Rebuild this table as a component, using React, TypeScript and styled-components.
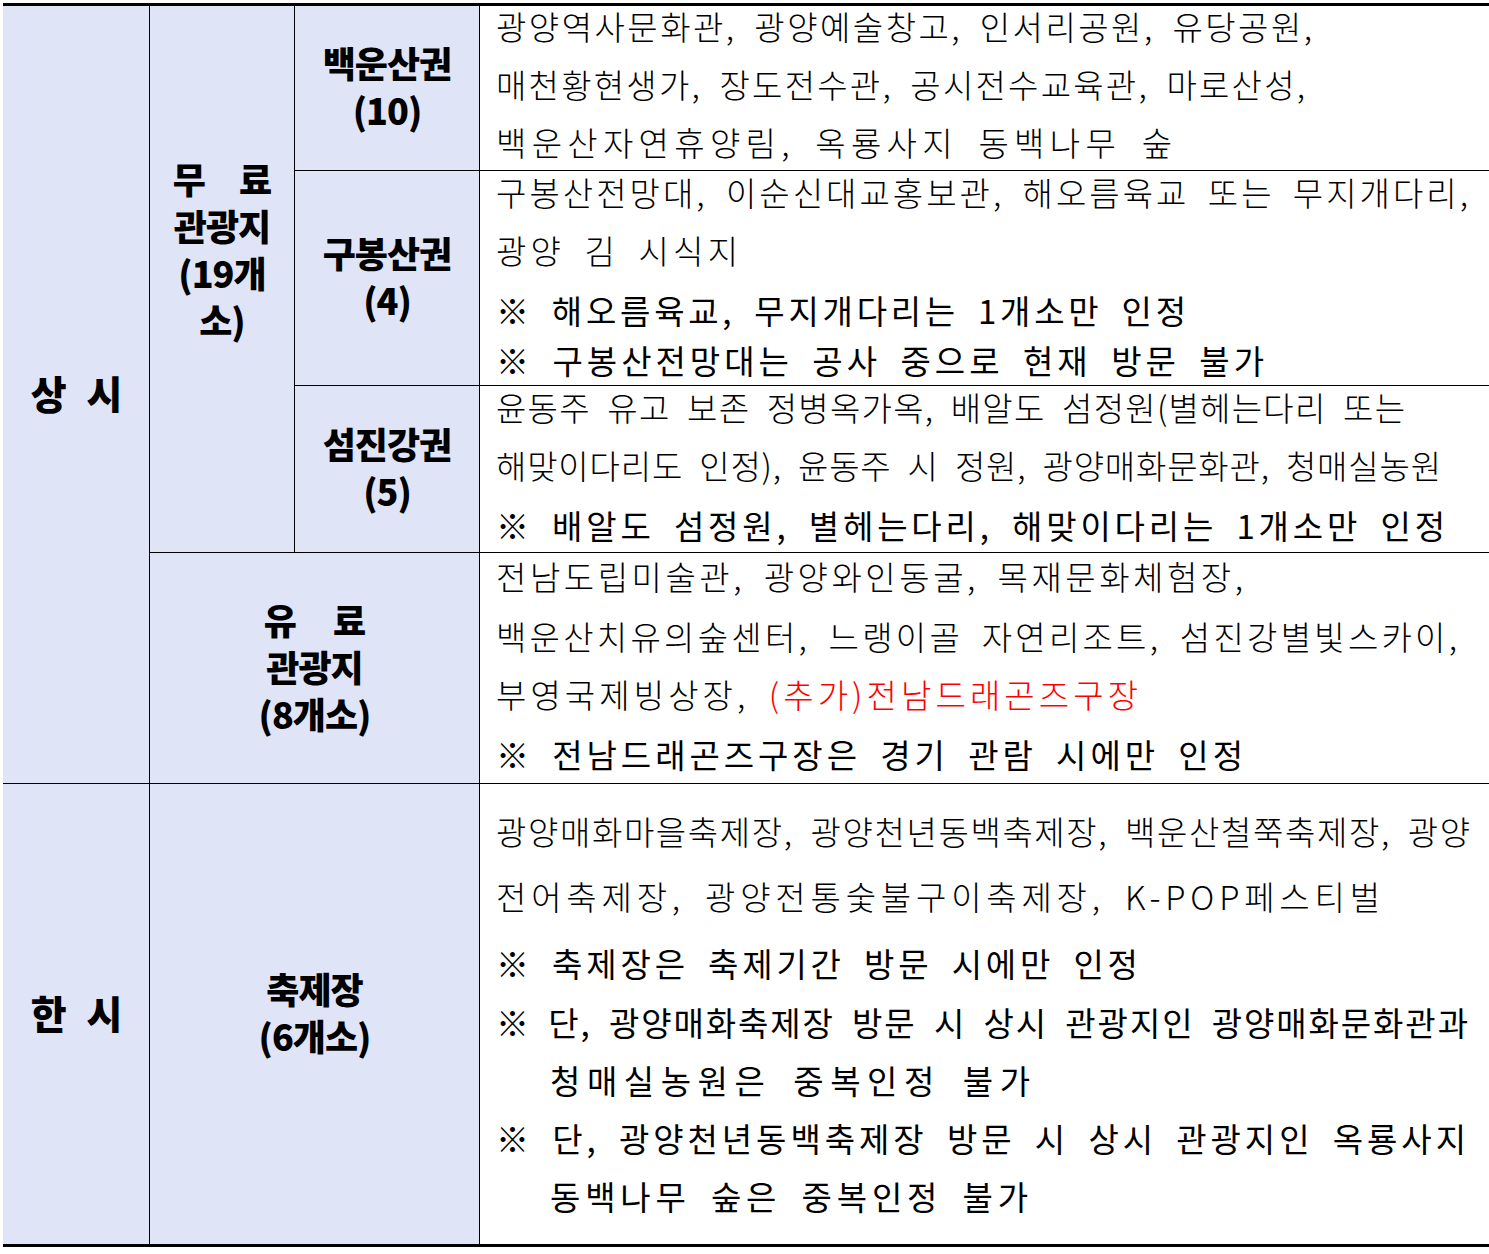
import React, { useLayoutEffect, useRef } from 'react';
import styled, { createGlobalStyle } from 'styled-components';

const Global = createGlobalStyle`
  html, body { margin: 0; padding: 0; background: #ffffff; }
  body { font-family: "Noto Sans CJK KR", "Noto Sans", sans-serif; color: #000; }
`;

const Table = styled.div`
  display: grid;
  grid-template-columns: 146px 144px 184px 1009px;
  grid-template-rows: 164px 214px 166px 230px 460px;
  gap: 1px;
  width: 1486px;
  margin: 3px 0 0 3px;
  background: #000;
  border-top: 3px solid #000;
  border-bottom: 3px solid #000;
`;

const LabelCell = styled.div<{ $col: string; $row: string; $shift?: number }>`
  grid-column: ${(p) => p.$col};
  grid-row: ${(p) => p.$row};
  background: #dfe5f7;
  display: flex;
  align-items: center;
  justify-content: center;
  padding-bottom: ${(p) => p.$shift ?? 4}px;
  box-sizing: border-box;
`;

const Label = styled.div<{ $size?: number; $ws?: number }>`
  font-family: "Noto Sans CJK KR", "Noto Sans", sans-serif;
  font-weight: 900;
  font-size: ${(p) => p.$size ?? 36}px;
  line-height: 47px;
  text-align: center;
  word-spacing: ${(p) => p.$ws ?? 0}px;
  white-space: nowrap;
  letter-spacing: -1px;
`;

const TextCell = styled.div<{ $row: string; $pt: number }>`
  grid-column: 4;
  grid-row: ${(p) => p.$row};
  background: #fff;
  display: flex;
  flex-direction: column;
  align-items: flex-start;
  padding: ${(p) => p.$pt}px 0 0 16px;
  box-sizing: border-box;
`;

const LineText = styled.span<{ $mt: number; $indent: number; $note: boolean }>`
  display: inline-block;
  margin-top: ${(p) => p.$mt}px;
  margin-left: ${(p) => p.$indent}px;
  font-family: "Noto Sans CJK KR", "Noto Sans", sans-serif;
  font-size: 33px;
  font-weight: ${(p) => (p.$note ? 400 : 300)};
  line-height: 40px;
  height: 40px;
  word-spacing: 8px;
  white-space: nowrap;
`;

const Red = styled.span`
  color: #ff0000;
`;

type LineDef = { t: React.ReactNode; end: number; mt?: number; indent?: number; note?: boolean };
type RowDef = { row: string; pt: number; lines: LineDef[] };

const FitLine: React.FC<{ line: LineDef }> = ({ line }) => {
  const ref = useRef<HTMLSpanElement>(null);
  const indent = line.indent ?? 0;
  const target = line.end - 496 - indent;
  useLayoutEffect(() => {
    const el = ref.current;
    if (!el) return;
    const fit = () => {
      el.style.letterSpacing = '0px';
      const w = el.getBoundingClientRect().width;
      const n = Array.from(el.textContent || '').length;
      const v = (target - w) / Math.max(n - 1, 1);
      el.style.letterSpacing = `${v}px`;
    };
    fit();
    if (document.fonts && document.fonts.ready) document.fonts.ready.then(fit);
  }, [target]);
  return (
    <LineText ref={ref} $mt={line.mt ?? 0} $indent={indent} $note={!!line.note}>
      {line.t}
    </LineText>
  );
};

const rows: RowDef[] = [
  {
    row: '1',
    pt: 0,
    lines: [
      { t: '광양역사문화관, 광양예술창고, 인서리공원, 유당공원,', end: 1312 },
      { t: '매천황현생가, 장도전수관, 공시전수교육관, 마로산성,', end: 1305, mt: 18 },
      { t: '백운산자연휴양림, 옥룡사지 동백나무 숲', end: 1172, mt: 18 },
    ],
  },
  {
    row: '2',
    pt: 1,
    lines: [
      { t: '구봉산전망대, 이순신대교홍보관, 해오름육교 또는 무지개다리,', end: 1468 },
      { t: '광양 김 시식지', end: 738, mt: 18 },
      { t: '※ 해오름육교, 무지개다리는 1개소만 인정', end: 1186, mt: 20, note: true },
      { t: '※ 구봉산전망대는 공사 중으로 현재 방문 불가', end: 1264, mt: 10, note: true },
    ],
  },
  {
    row: '3',
    pt: 1,
    lines: [
      { t: '윤동주 유고 보존 정병옥가옥, 배알도 섬정원(별헤는다리 또는', end: 1405 },
      { t: '해맞이다리도 인정), 윤동주 시 정원, 광양매화문화관, 청매실농원', end: 1441, mt: 18 },
      { t: '※ 배알도 섬정원, 별헤는다리, 해맞이다리는 1개소만 인정', end: 1445, mt: 20, note: true },
    ],
  },
  {
    row: '4',
    pt: 3,
    lines: [
      { t: '전남도립미술관, 광양와인동굴, 목재문화체험장,', end: 1243 },
      { t: '백운산치유의숲센터, 느랭이골 자연리조트, 섬진강별빛스카이,', end: 1457, mt: 20 },
      {
        t: (
          <>
            부영국제빙상장, <Red>(추가)전남드래곤즈구장</Red>
          </>
        ),
        end: 1138,
        mt: 18,
      },
      { t: '※ 전남드래곤즈구장은 경기 관람 시에만 인정', end: 1243, mt: 20, note: true },
    ],
  },
  {
    row: '5',
    pt: 27,
    lines: [
      { t: '광양매화마을축제장, 광양천년동백축제장, 백운산철쭉축제장, 광양', end: 1470 },
      { t: '전어축제장, 광양전통숯불구이축제장, K-POP페스티벌', end: 1380, mt: 25 },
      { t: '※ 축제장은 축제기간 방문 시에만 인정', end: 1138, mt: 27, note: true },
      { t: '※ 단, 광양매화축제장 방문 시 상시 관광지인 광양매화문화관과', end: 1468, mt: 19, note: true },
      { t: '청매실농원은 중복인정 불가', end: 1030, mt: 18, indent: 54, note: true },
      { t: '※ 단, 광양천년동백축제장 방문 시 상시 관광지인 옥룡사지', end: 1466, mt: 18, note: true },
      { t: '동백나무 숲은 중복인정 불가', end: 1028, mt: 18, indent: 54, note: true },
    ],
  },
];

export default function App() {
  return (
    <>
      <Global />
      <Table>
        <LabelCell $col="1" $row="1 / 5">
          <Label $size={39} $ws={13}>상 시</Label>
        </LabelCell>
        <LabelCell $col="2" $row="1 / 4" $shift={60}>
          <Label $ws={27}>
            무 료
            <br />
            관광지
            <br />
            (19개
            <br />
            소)
          </Label>
        </LabelCell>
        <LabelCell $col="3" $row="1">
          <Label>
            백운산권
            <br />
            (10)
          </Label>
        </LabelCell>
        <LabelCell $col="3" $row="2">
          <Label>
            구봉산권
            <br />
            (4)
          </Label>
        </LabelCell>
        <LabelCell $col="3" $row="3">
          <Label>
            섬진강권
            <br />
            (5)
          </Label>
        </LabelCell>
        <LabelCell $col="2 / 4" $row="4">
          <Label $ws={30}>
            유 료
            <br />
            관광지
            <br />
            (8개소)
          </Label>
        </LabelCell>
        <LabelCell $col="1" $row="5">
          <Label $size={39} $ws={13}>한 시</Label>
        </LabelCell>
        <LabelCell $col="2 / 4" $row="5">
          <Label>
            축제장
            <br />
            (6개소)
          </Label>
        </LabelCell>
        {rows.map((r) => (
          <TextCell key={r.row} $row={r.row} $pt={r.pt}>
            {r.lines.map((l, i) => (
              <FitLine key={i} line={l} />
            ))}
          </TextCell>
        ))}
      </Table>
    </>
  );
}
